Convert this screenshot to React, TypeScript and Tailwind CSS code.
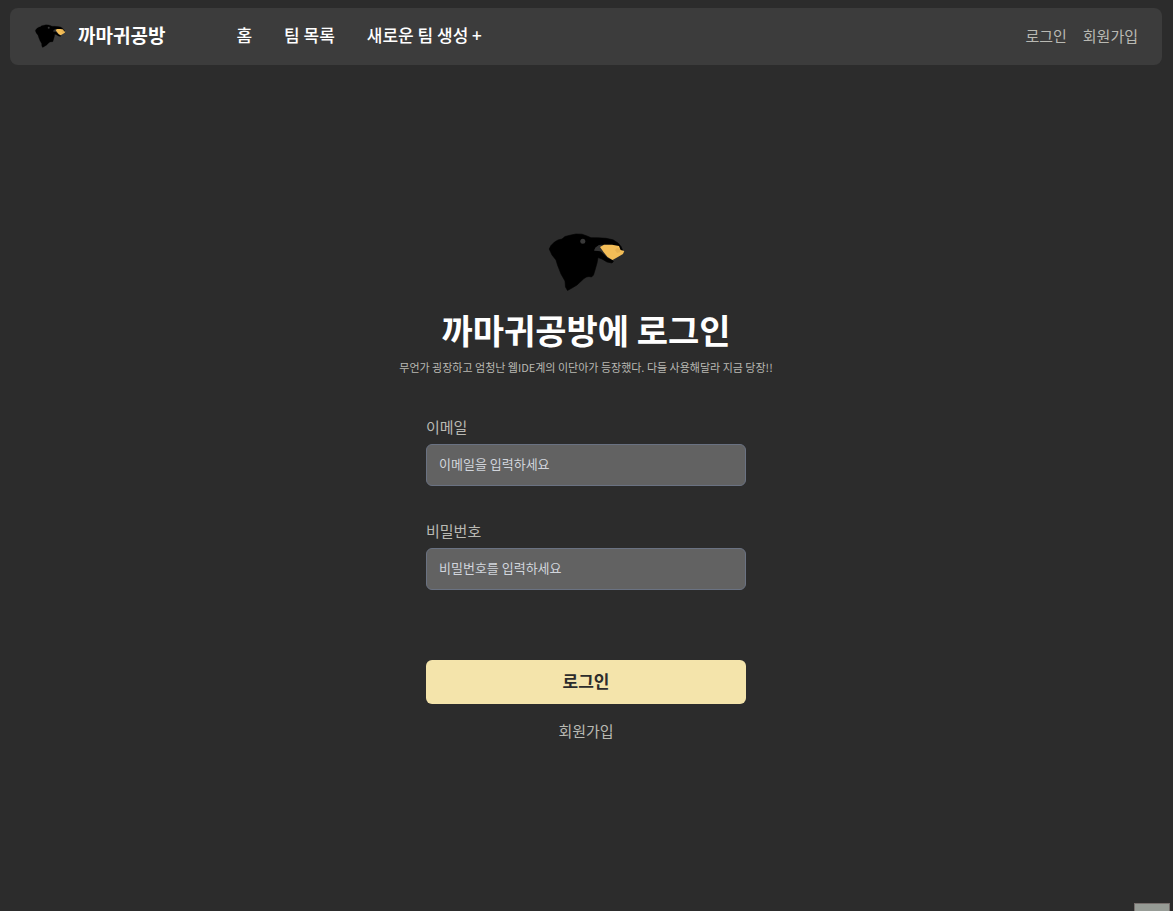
import type { InputHTMLAttributes } from "react";

function CrowLogo({ className }: { className?: string }) {
  return (
    <svg viewBox="-1 0 80 60" className={className} aria-hidden="true">
      <path
        d="M2.200 17 4 13.500 7.500 10 11 8 15 7 18 4.500 24 3 29 2 35 2.200 40 4 44 5.700 51 5.800 59 6.300 66 7.800 71 11 74 14.500 75.500 18 75 19.500 73.500 18.500 72 15 65 13 58 12.500 52 13 48.500 15.500 47 19 53 19 58 23.500 61 26.500 65 28 66.500 29.500 65 31 60 30 55 27 51 25.500 50 31 48 38 46.500 43 44.500 45 42 44.500 39.500 45 37 46.500 30 53 25 56 20.500 58.500 18.500 55 18 49 14 42 10.500 33 9 28 5 23Z"
        fill="#000"
        stroke="#000"
        strokeWidth="0.600"
        strokeLinejoin="round"
      />
      <path d="M47 18.500 48.500 15.500 52 13 55 12.800 53 15.500 55 19.500Z" fill="#323232" />
      <circle cx="35.800" cy="9.200" r="2.500" fill="#383838" />
      <path
        d="M53 15 57 12.700 65 12.700 72 14 73.500 18 75.500 18.500 77.300 19 76 22 70 25.500 65.500 28 60.500 25 56.500 20Z"
        fill="#f3bd57"
      />
      <path d="M68 18 70 16 73 17 73.500 20 70 21Z" fill="#e6b04f" />
    </svg>
  );
}

type FieldProps = InputHTMLAttributes<HTMLInputElement> & { id: string; label: string };

function Field({ id, label, ...props }: FieldProps) {
  return (
    <div className="flex flex-col gap-0.5">
      <label htmlFor={id} className="text-[15px] leading-[30px] text-[#b9b9b3]">
        {label}
      </label>
      <input
        id={id}
        {...props}
        className="h-[42px] w-full rounded-md border border-gray-500 bg-[#626262] px-3 pb-1 text-[13px] text-white outline-none placeholder:text-gray-300"
      />
    </div>
  );
}

export default function App() {
  return (
    <div className="flex min-h-screen flex-col bg-[#2c2c2c] pt-2 pr-[11px] pl-2.5 font-['Noto_Sans_CJK_KR',sans-serif] text-white">
      <header className="flex h-[57px] items-center justify-between rounded-lg bg-[#3c3c3c] px-6">
        <div className="flex items-center gap-[71px]">
          <a href="#home" className="flex items-center gap-3 pb-0.5 text-[19px] font-bold">
            <CrowLogo className="h-6 w-8" />
            까마귀공방
          </a>
          <nav className="flex gap-8 pb-1 text-[17px] font-medium">
            <a href="#home">홈</a>
            <a href="#teams">팀 목록</a>
            <a href="#new-team">새로운 팀 생성 +</a>
          </nav>
        </div>
        <nav className="flex gap-4 text-[15px] text-[#b9b9b3]">
          <a href="#login">로그인</a>
          <a href="#signup">회원가입</a>
        </nav>
      </header>

      <main className="flex flex-1 flex-col items-center pt-[167px]">
        <CrowLogo className="h-15 w-20" />
        <h1 className="mt-4 text-[34px] leading-11 font-bold">까마귀공방에 로그인</h1>
        <p className="mt-[7px] text-[11px] leading-4 text-[#b9b9b3]">
          무언가 굉장하고 엄청난 웹IDE계의 이단아가 등장했다. 다들 사용해달라 지금 당장!!
        </p>
        <form className="mt-[37px] flex w-80 flex-col" onSubmit={(event) => event.preventDefault()}>
          <div className="flex flex-col gap-[30px]">
            <Field id="email" label="이메일" type="email" placeholder="이메일을 입력하세요" />
            <Field id="password" label="비밀번호" type="password" placeholder="비밀번호를 입력하세요" />
          </div>
          <button
            type="submit"
            className="mt-[70px] h-11 rounded-md bg-[#f4e4ab] pb-0.5 text-[17px] font-bold text-[#2c2c2c]"
          >
            로그인
          </button>
          <a href="#signup" className="mt-[15px] self-center text-[15px] leading-6 text-[#b9b9b3]">
            회원가입
          </a>
        </form>
      </main>

      <div className="-mr-2 h-2 w-9 self-end border border-b-0 border-[#776f6d] bg-[#979c96]" />
    </div>
  );
}
